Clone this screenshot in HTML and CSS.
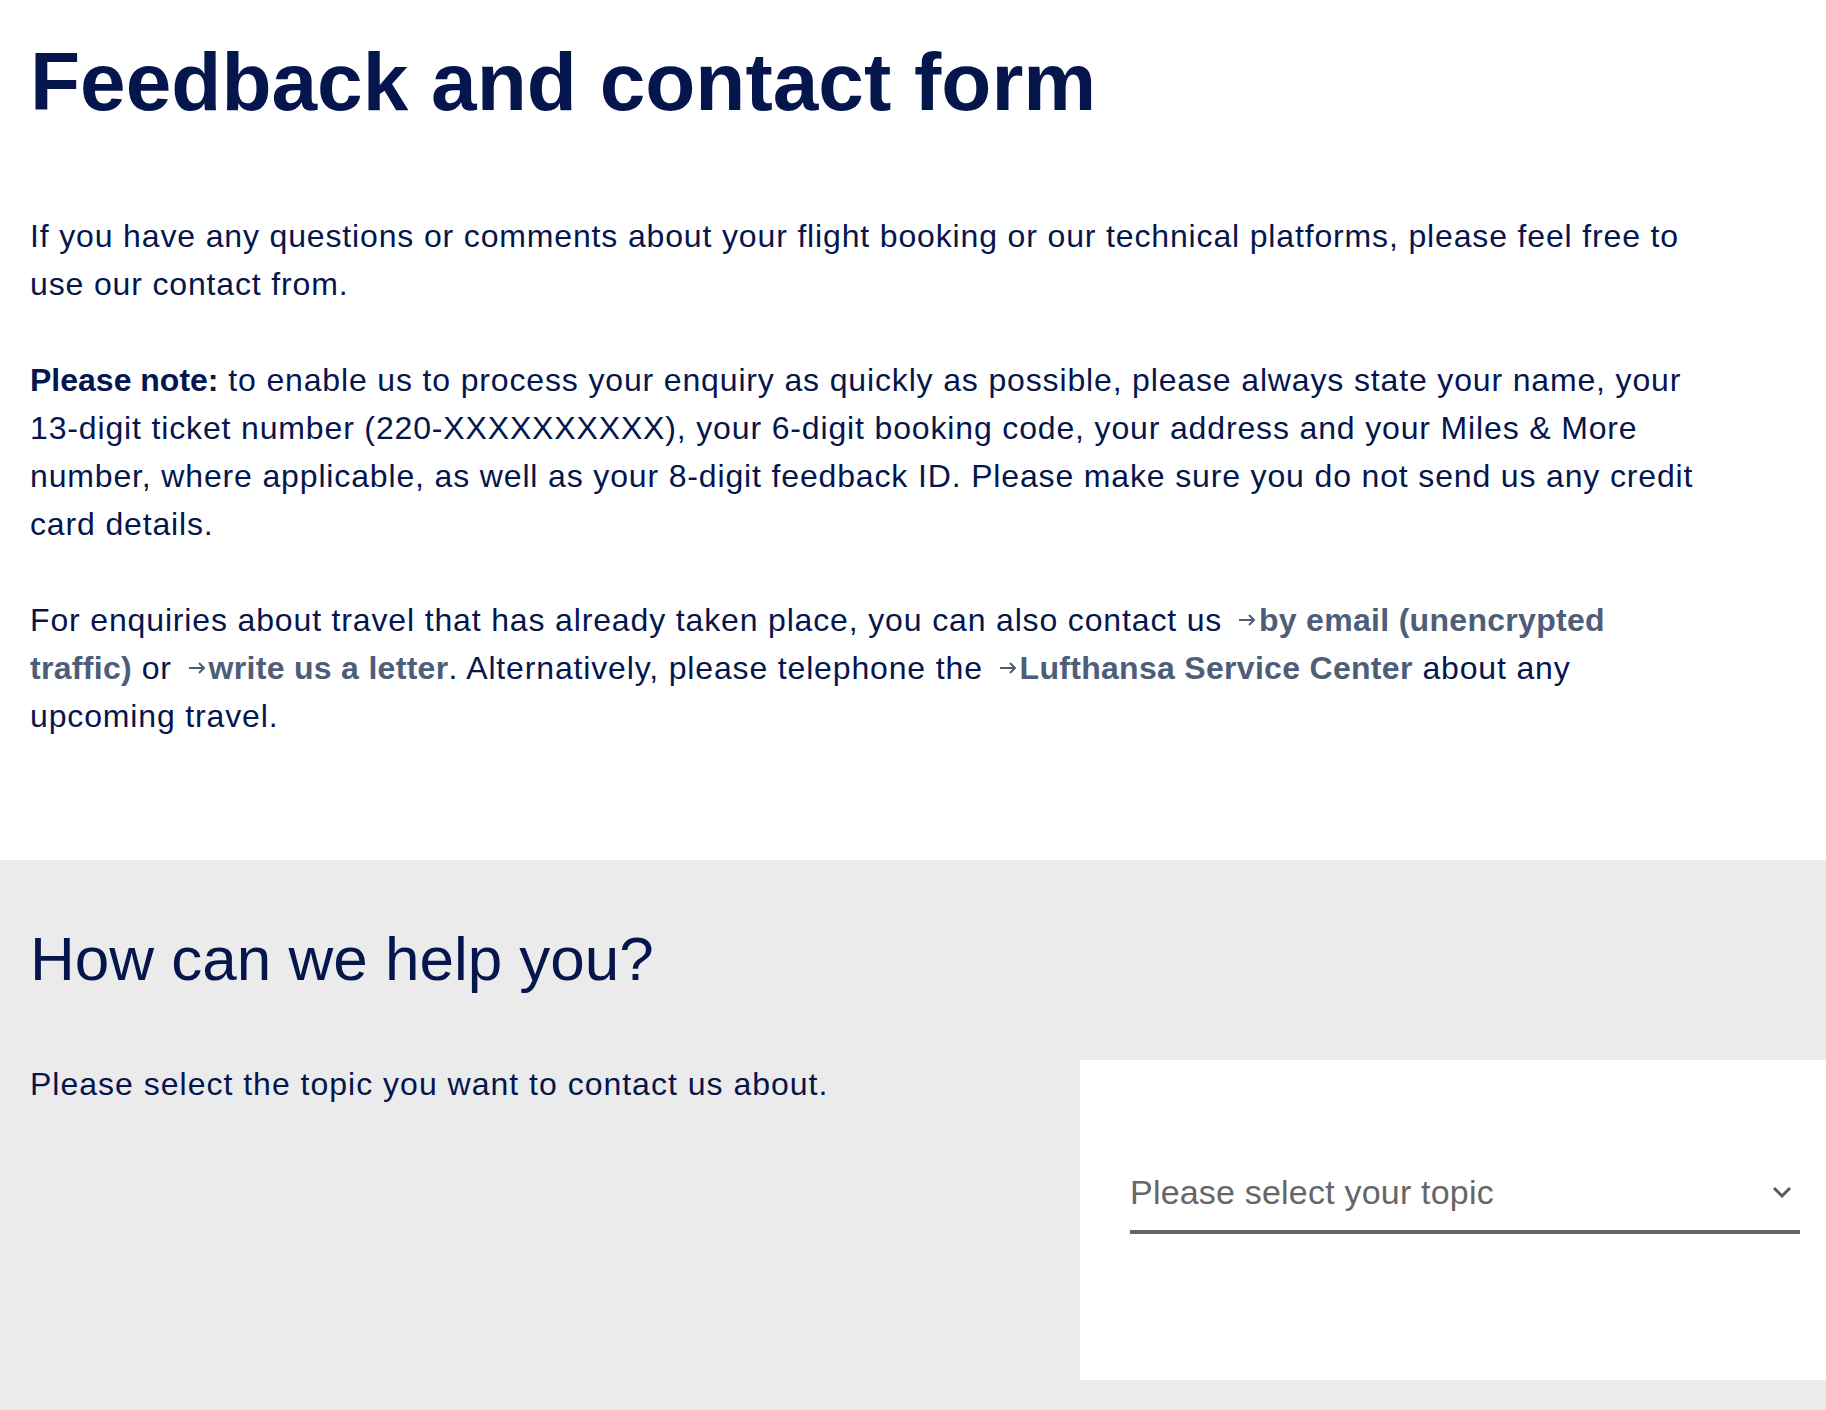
FILE: index.html
```
<!DOCTYPE html>
<html>
<head>
<meta charset="utf-8">
<title>Feedback and contact form</title>
<link rel="stylesheet" href="styles.css">
</head>
<body>

<div class="intro">
  <h1>Feedback and contact form</h1>
  <p>If you have any questions or comments about your flight booking or our technical platforms, please feel free to use our contact from.</p>
  <p><b>Please note:</b> to enable us to process your enquiry as quickly as possible, please always state your name, your <span class="nw">13-digit</span> ticket number (220-XXXXXXXXXX), your <span class="nw">6-digit</span> booking code, your address and your Miles &amp; More number, where applicable, as well as your <span class="nw">8-digit</span> feedback ID. Please make sure you do not send us any credit card details.</p>
  <p>For enquiries about travel that has already taken place, you can also contact us <a href="#" class="link"><span class="nw"><svg class="arrow" width="20" height="12" viewBox="0 0 20 12"><path d="M2 6 H17 M12 1 L17 6 L12 11" fill="none" stroke="currentColor" stroke-width="2"/></svg>by</span> email (unencrypted traffic)</a> or <a href="#" class="link"><span class="nw"><svg class="arrow" width="20" height="12" viewBox="0 0 20 12"><path d="M2 6 H17 M12 1 L17 6 L12 11" fill="none" stroke="currentColor" stroke-width="2"/></svg>write</span> us a letter</a>. Alternatively, please telephone the <a href="#" class="link"><span class="nw"><svg class="arrow" width="20" height="12" viewBox="0 0 20 12"><path d="M2 6 H17 M12 1 L17 6 L12 11" fill="none" stroke="currentColor" stroke-width="2"/></svg>Lufthansa</span> Service Center</a> about any upcoming travel.</p>
</div>

<div class="help">
  <h2>How can we help you?</h2>
  <div class="help-row">
    <div class="help-text">
      <p>Please select the topic you want to contact us about.</p>
    </div>
    <div class="topic-box">
      <div class="topic-select">
        <span>Please select your topic</span>
        <svg class="chevron" width="20" height="12" viewBox="0 0 20 12"><path d="M2 2 L10 10 L18 2" fill="none" stroke="currentColor" stroke-width="3"/></svg>
      </div>
    </div>
  </div>
</div>

</body>
</html>
```

FILE: styles.css
```
body {
  margin: 0;
  font-family: "Liberation Sans", Arial, Helvetica, sans-serif;
  color: #05164d;
  background-color: white;
}

/* Top part with the intro text */
.intro {
  padding: 33px 30px 72px 30px;
}

.intro h1 {
  margin: 0 0 81px 0;
  font-size: 82px;
  line-height: 98px;
  font-weight: bold;
}

.intro p {
  max-width: 1676px;
  margin: 0 0 48px 0;
  font-size: 32px;
  line-height: 48px;
  letter-spacing: 0.85px;
}

.intro b {
  font-weight: bold;
  letter-spacing: 0;
}

.link {
  color: #4e5d78;
  font-weight: bold;
  letter-spacing: 0.3px;
  text-decoration: none;
}

.nw {
  white-space: nowrap;
}

.arrow {
  margin: 0 2px 0 5px;
  vertical-align: 5px;
}

/* Grey block with the topic select */
.help {
  background-color: #ebebeb;
  padding: 62px 0 60px 30px;
}

.help h2 {
  margin: 0 0 64px 0;
  font-size: 62px;
  line-height: 74px;
  font-weight: normal;
}

.help-row {
  display: flex;
}

.help-text {
  width: 1050px;
  flex-shrink: 0;
}

.help-text p {
  margin: 0;
  font-size: 32px;
  line-height: 48px;
  letter-spacing: 1px;
}

.topic-box {
  flex: 1;
  height: 320px;
  box-sizing: border-box;
  background-color: white;
  padding: 108px 26px 0 50px;
}

.topic-select {
  display: flex;
  align-items: center;
  justify-content: space-between;
  padding: 0 8px 14px 0;
  border-bottom: 4px solid #666;
  font-size: 34px;
  line-height: 48px;
  letter-spacing: 0.2px;
  color: #666;
}

.chevron {
  color: #5a5a5a;
}
```
